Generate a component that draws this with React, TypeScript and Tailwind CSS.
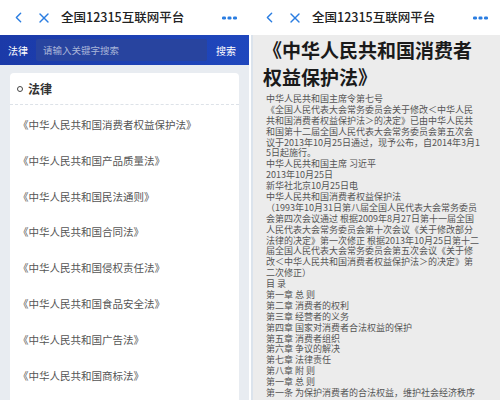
import { ChevronLeft, X } from 'lucide-react';

const FONT = { fontFamily: '"Noto Sans CJK SC", "Noto Sans", sans-serif' };

const LAWS = [
    '《中华人民共和国消费者权益保护法》',
    '《中华人民共和国产品质量法》',
    '《中华人民共和国民法通则》',
    '《中华人民共和国合同法》',
    '《中华人民共和国侵权责任法》',
    '《中华人民共和国食品安全法》',
    '《中华人民共和国广告法》',
    '《中华人民共和国商标法》',
];

const LINES = [
    '中华人民共和国主席令第七号',
    '《全国人民代表大会常务委员会关于修改＜中华人民',
    '共和国消费者权益保护法＞的决定》已由中华人民共',
    '和国第十二届全国人民代表大会常务委员会第五次会',
    '议于2013年10月25日通过，现予公布，自2014年3月1',
    '5日起施行。',
    '中华人民共和国主席 习近平',
    '2013年10月25日',
    '新华社北京10月25日电',
    '中华人民共和国消费者权益保护法',
    '（1993年10月31日第八届全国人民代表大会常务委员',
    '会第四次会议通过 根据2009年8月27日第十一届全国',
    '人民代表大会常务委员会第十次会议《关于修改部分',
    '法律的决定》第一次修正 根据2013年10月25日第十二',
    '届全国人民代表大会常务委员会第五次会议《关于修',
    '改＜中华人民共和国消费者权益保护法＞的决定》第',
    '二次修正）',
    '目 录',
    '第一章 总 则',
    '第二章 消费者的权利',
    '第三章 经营者的义务',
    '第四章 国家对消费者合法权益的保护',
    '第五章 消费者组织',
    '第六章 争议的解决',
    '第七章 法律责任',
    '第八章 附 则',
    '第一章 总 则',
    '第一条 为保护消费者的合法权益，维护社会经济秩序',
];

function Dots() {
    return (
        <svg width="15" height="4" viewBox="0 0 15 4">
            <rect x="0" y="0.5" width="4" height="3" rx="1.2" fill="#2a7de1" />
            <rect x="5.5" y="0.5" width="4" height="3" rx="1.2" fill="#2a7de1" />
            <rect x="11" y="0.5" width="4" height="3" rx="1.2" fill="#2a7de1" />
        </svg>
    );
}

function TopBar() {
    return (
        <div className="h-[35px] shrink-0 bg-white flex items-center">
            <ChevronLeft size={17} strokeWidth={2} color="#2a7de1" className="ml-[10px]" />
            <X size={16} strokeWidth={2} color="#2a7de1" className="ml-[9px]" />
            <span className="ml-[9px] text-[12.5px] text-[#222] font-medium">全国12315互联网平台</span>
            <div className="ml-auto mr-[12px]"><Dots /></div>
        </div>
    );
}

export default function App() {
    return (
        <div className="w-[500px] h-[403px] bg-white flex gap-[2px] overflow-hidden" style={FONT}>
            {/* left: list of laws */}
            <div className="w-[249px] h-[400px] flex flex-col">
                <TopBar />
                <div className="h-[30px] shrink-0 bg-gradient-to-r from-[#1b3aa8] to-[#1f47bd] flex items-center px-[8px]">
                    <span className="text-[10px] text-white">法律</span>
                    <div className="ml-[8px] w-[171px] h-[22px] bg-[#28449f] rounded-[2px] flex items-center px-[7px]">
                        <span className="text-[9.5px] text-[#a9b5d8]">请输入关键字搜索</span>
                    </div>
                    <span className="ml-auto mr-[5px] text-[10px] text-white">搜索</span>
                </div>
                <div className="flex-1 bg-[#e8ecf1] px-[10px] pt-[8px] flex flex-col">
                    <div className="flex-1 bg-white rounded-t-[4px]">
                        <div className="h-[32px] flex items-center px-[7px] border-b border-dashed border-[#dde2e8]">
                            <span className="w-[6px] h-[6px] rounded-full border-[1.5px] border-[#444]" />
                            <span className="ml-[5px] text-[12px] font-bold text-[#333]">法律</span>
                        </div>
                        <div className="pt-[2px]">
                            {LAWS.map((law) => (
                                <div key={law} className="h-[35.8px] flex items-center px-[8px] text-[10.5px] text-[#555]">
                                    {law}
                                </div>
                            ))}
                        </div>
                    </div>
                </div>
            </div>

            {/* right: article */}
            <div className="flex-1 h-[400px] flex flex-col">
                <TopBar />
                <div className="flex-1 bg-[#ececec] border-l-2 border-[#dbe3ec] pl-[10px] pr-[4px] overflow-hidden">
                    <h1 className="mt-[1px] text-[19px] leading-[27px] font-bold text-[#1a1a1a] whitespace-nowrap">
                        《中华人民共和国消费者<br />权益保护法》
                    </h1>
                    <div className="mt-[4px] pl-[3px] text-[9px] leading-[10.9px] text-[#555]">
                        {LINES.map((l, i) => (
                            <div key={i} className="h-[10.9px] whitespace-nowrap">{l}</div>
                        ))}
                    </div>
                </div>
            </div>
        </div>
    );
}
